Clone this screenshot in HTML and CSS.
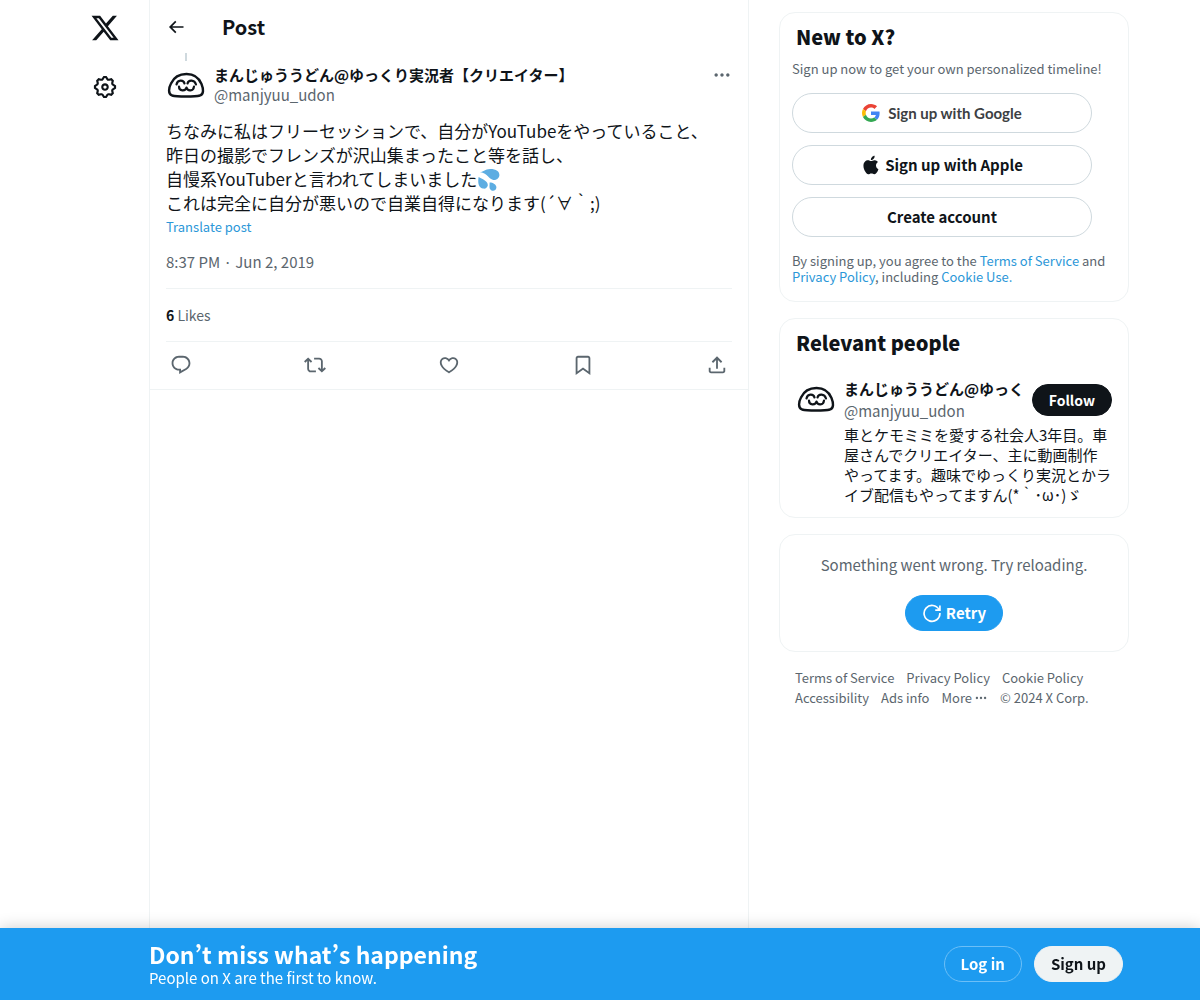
FILE: index.html
```
<!DOCTYPE html>
<html lang="ja">
<head>
  <meta charset="UTF-8">
  <meta name="viewport" content="width=device-width, initial-scale=1.0">
  <title>Post / X</title>
  <link rel="stylesheet" href="styles.css">
</head>
<body>
  <!-- Shared drawings -->
  <svg class="defs" aria-hidden="true">
    <symbol id="face" viewBox="0 0 40 40">
      <path d="M6 30.500C2 29 2.500 23 5 18.500 8 12 14 9 20.500 9 28 9 33 13 35.500 19c2 5 2.500 10-1.500 11.500-5 1.300-23 1.300-28 0z" fill="#fff" stroke="#0f1419" stroke-width="2.400" stroke-linejoin="round"/>
      <path d="M10.500 19.500c1-5 7-5 8-1M21.500 18.500c1-4 7-4 8.500 1M13 21.500c0 5 6.500 5 7.500 1 1 4 7 4 7.500-1" fill="none" stroke="#0f1419" stroke-width="2.200" stroke-linecap="round" stroke-linejoin="round"/>
    </symbol>
  </svg>

  <div class="layout">
    <!-- Left Navigation -->
    <header class="side-nav">
      <a href="#" aria-label="X">
        <svg class="logo" viewBox="0 0 24 24"><path d="M18.244 2.25h3.308l-7.227 8.26 8.502 11.24H16.17l-5.214-6.817L4.99 21.75H1.68l7.73-8.835L1.254 2.25H8.08l4.713 6.231zm-1.161 17.52h1.833L7.084 4.126H5.117z"/></svg>
      </a>
      <a href="#" aria-label="Settings">
        <svg class="settings-icon" viewBox="0 0 24 24"><path d="M10.54 1.75h2.92l1.57 2.36c.11.17.32.25.53.21l2.53-.59 2.17 2.17-.58 2.54c-.05.2.04.41.21.53l2.36 1.57v2.92l-2.36 1.57c-.17.12-.26.33-.21.53l.58 2.54-2.17 2.17-2.53-.59c-.21-.04-.42.04-.53.21l-1.57 2.36h-2.92l-1.58-2.36c-.11-.17-.32-.25-.52-.21l-2.54.59-2.17-2.17.58-2.54c.05-.2-.03-.41-.21-.53l-2.35-1.57v-2.92L4.1 8.97c.18-.12.26-.33.21-.53L3.73 5.9 5.9 3.73l2.54.59c.2.04.41-.04.52-.21l1.58-2.36zm1.07 2l-.98 1.47C10.05 6.08 9 6.5 7.99 6.27l-1.46-.34-.6.6.33 1.46c.24 1.01-.18 2.07-1.05 2.64l-1.46.98v.78l1.46.98c.87.57 1.29 1.63 1.05 2.64l-.33 1.46.6.6 1.46-.34c1.01-.23 2.06.19 2.64 1.05l.98 1.47h.78l.97-1.47c.58-.86 1.63-1.28 2.65-1.05l1.45.34.61-.6-.34-1.46c-.23-1.01.18-2.07 1.05-2.64l1.47-.98v-.78l-1.47-.98c-.87-.57-1.28-1.63-1.05-2.64l.34-1.46-.61-.6-1.45.34c-1.02.23-2.07-.19-2.65-1.05l-.97-1.47h-.78zM12 10.5c-.83 0-1.5.67-1.5 1.5s.67 1.5 1.5 1.5c.82 0 1.5-.67 1.5-1.5s-.68-1.5-1.5-1.5zM8.5 12c0-1.93 1.56-3.5 3.5-3.5 1.93 0 3.5 1.57 3.5 3.5s-1.57 3.5-3.5 3.5c-1.94 0-3.5-1.57-3.5-3.5z"/></svg>
      </a>
    </header>

    <!-- Post Column -->
    <main class="timeline">
      <div class="topbar">
        <button class="icon-btn" type="button" aria-label="Back">
          <svg class="small-icon" viewBox="0 0 24 24"><path d="M7.414 13l5.043 5.04-1.414 1.42L3.586 12l7.457-7.46 1.414 1.42L7.414 11H21v2H7.414z"/></svg>
        </button>
        <h1>Post</h1>
      </div>

      <article class="post">
        <div class="thread-line"></div>
        <div class="author">
          <svg class="avatar"><use href="#face"/></svg>
          <div class="author-names">
            <a class="name" href="#">まんじゅううどん@ゆっくり実況者【クリエイター】</a>
            <a class="handle" href="#">@manjyuu_udon</a>
          </div>
          <button class="icon-btn more" type="button" aria-label="More">
            <svg class="small-icon" viewBox="0 0 24 24"><path d="M3 12c0-1.1.9-2 2-2s2 .9 2 2-.9 2-2 2-2-.9-2-2zm9 2c1.1 0 2-.9 2-2s-.9-2-2-2-2 .9-2 2 .9 2 2 2zm7 0c1.1 0 2-.9 2-2s-.9-2-2-2-2 .9-2 2 .9 2 2 2z"/></svg>
          </button>
        </div>
        <p class="post-text">ちなみに私はフリーセッションで、自分がYouTubeをやっていること、<br>昨日の撮影でフレンズが沢山集まったこと等を話し、<br>自慢系YouTuberと言われてしまいました<svg class="emoji" viewBox="0 0 36 36" role="img" aria-label="sweat drops"><path fill="#5dade2" d="M3 5c7 0 8-5 17-5 10 0 15 4 15 10 0 5-5 9-10 8C17 16 17 8 3 5zM1 13c6 3 16 7 15 14-1 4-4 6-8 5-6-1-9-7-7-19zM19 22c6 0 12 4 11 9-1 5-7 6-10 2-2-2-1-6-1-11z"/></svg><br>これは完全に自分が悪いので自業自得になります(´∀｀;)</p>
        <button class="translate" type="button">Translate post</button>
        <div class="post-date"><a href="#">8:37 PM · Jun 2, 2019</a></div>
        <div class="stats"><a href="#"><strong>6</strong> Likes</a></div>
        <div class="actions">
          <button class="icon-btn" type="button" aria-label="Reply"><svg class="icon" viewBox="0 0 24 24"><path d="M1.751 10c0-4.42 3.584-8 8.005-8h4.366c4.49 0 8.129 3.64 8.129 8.13 0 2.96-1.607 5.68-4.196 7.11l-8.054 4.46v-3.69h-.067c-4.49.1-8.183-3.51-8.183-8.01zm8.005-6c-3.317 0-6.005 2.69-6.005 6 0 3.37 2.77 6.08 6.138 6.01l.351-.01h1.761v2.3l5.087-2.81c1.951-1.08 3.163-3.13 3.163-5.36 0-3.39-2.744-6.13-6.129-6.13H9.756z"/></svg></button>
          <button class="icon-btn" type="button" aria-label="Repost"><svg class="icon" viewBox="0 0 24 24"><path d="M4.5 3.88l4.432 4.14-1.364 1.46L5.5 7.55V16c0 1.1.896 2 2 2H13v2H7.5c-2.209 0-4-1.79-4-4V7.55L1.432 9.48.068 8.02 4.5 3.88zM16.5 6H11V4h5.5c2.209 0 4 1.79 4 4v8.45l2.068-1.93 1.364 1.46-4.432 4.14-4.432-4.14 1.364-1.46 2.068 1.93V8c0-1.1-.896-2-2-2z"/></svg></button>
          <button class="icon-btn" type="button" aria-label="Like"><svg class="icon" viewBox="0 0 24 24"><path d="M16.697 5.5c-1.222-.06-2.679.51-3.89 2.16l-.805 1.09-.806-1.09C9.984 6.01 8.526 5.44 7.304 5.5c-1.243.07-2.349.78-2.91 1.91-.552 1.12-.633 2.78.479 4.82 1.074 1.97 3.257 4.27 7.129 6.61 3.87-2.34 6.052-4.64 7.126-6.61 1.111-2.04 1.03-3.7.477-4.82-.561-1.13-1.666-1.84-2.908-1.91zm4.187 7.69c-1.351 2.48-4.001 5.12-8.379 7.67l-.503.3-.504-.3c-4.379-2.55-7.029-5.19-8.382-7.67-1.36-2.5-1.41-4.86-.514-6.67.887-1.79 2.647-2.91 4.601-3.01 1.651-.09 3.368.56 4.798 2.01 1.429-1.45 3.146-2.1 4.796-2.01 1.954.1 3.714 1.22 4.601 3.01.896 1.81.846 4.17-.514 6.67z"/></svg></button>
          <button class="icon-btn" type="button" aria-label="Bookmark"><svg class="icon" viewBox="0 0 24 24"><path d="M4 4.5C4 3.12 5.119 2 6.5 2h11C18.881 2 20 3.12 20 4.5v18.44l-8-5.71-8 5.71V4.5zM6.5 4c-.276 0-.5.22-.5.5v14.56l6-4.29 6 4.29V4.5c0-.28-.224-.5-.5-.5h-11z"/></svg></button>
          <button class="icon-btn" type="button" aria-label="Share"><svg class="icon" viewBox="0 0 24 24"><path d="M12 2.59l5.7 5.7-1.41 1.42L13 6.41V16h-2V6.41l-3.3 3.3-1.41-1.42L12 2.59zM21 15l-.02 3.51c0 1.38-1.12 2.49-2.5 2.49H5.5C4.11 21 3 19.88 3 18.5V15h2v3.5c0 .28.22.5.5.5h12.98c.28 0 .5-.22.5-.5L19 15h2z"/></svg></button>
        </div>
      </article>
    </main>

    <!-- Sidebar -->
    <aside class="sidebar">
      <section class="card signup">
        <h2>New to X?</h2>
        <p class="hint">Sign up now to get your own personalized timeline!</p>
        <button class="pill google" type="button">
          <svg class="google-logo" viewBox="0 0 48 48"><path fill="#EA4335" d="M24 9.5c3.54 0 6.71 1.22 9.21 3.6l6.85-6.85C35.9 2.38 30.47 0 24 0 14.62 0 6.51 5.38 2.56 13.22l7.98 6.19C12.43 13.72 17.74 9.5 24 9.5z"/><path fill="#4285F4" d="M46.98 24.55c0-1.57-.15-3.09-.38-4.55H24v9.02h12.94c-.58 2.96-2.26 5.48-4.78 7.18l7.73 6c4.51-4.18 7.09-10.36 7.09-17.65z"/><path fill="#FBBC05" d="M10.53 28.59c-.48-1.45-.76-2.99-.76-4.59s.27-3.14.76-4.59l-7.98-6.19C.92 16.46 0 20.12 0 24c0 3.88.92 7.54 2.56 10.78l7.97-6.19z"/><path fill="#34A853" d="M24 48c6.48 0 11.93-2.13 15.89-5.81l-7.73-6c-2.15 1.45-4.92 2.3-8.16 2.3-6.26 0-11.57-4.22-13.47-9.91l-7.98 6.19C6.51 42.62 14.62 48 24 48z"/></svg>
          Sign up with Google
        </button>
        <button class="pill" type="button">
          <svg class="small-icon" viewBox="0 0 24 24"><path d="M16.365 1.43c0 1.14-.493 2.27-1.177 3.08-.744.9-1.99 1.57-2.987 1.57-.12 0-.23-.02-.3-.03-.01-.06-.04-.22-.04-.39 0-1.15.572-2.27 1.206-2.98.804-.94 2.142-1.64 3.248-1.68.03.13.05.28.05.43zm4.565 15.71c-.03.07-.463 1.58-1.518 3.12-.945 1.34-1.94 2.71-3.43 2.71-1.517 0-1.9-.88-3.63-.88-1.698 0-2.302.91-3.67.91-1.377 0-2.332-1.26-3.428-2.8-1.287-1.82-2.323-4.63-2.323-7.28 0-4.28 2.797-6.55 5.552-6.55 1.448 0 2.675.95 3.6.95.865 0 2.222-1.01 3.902-1.01.613 0 2.886.06 4.374 2.19-.13.09-2.383 1.37-2.383 4.19 0 3.26 2.854 4.42 2.955 4.45z"/></svg>
          Sign up with Apple
        </button>
        <button class="pill" type="button">Create account</button>
        <p class="legal">By signing up, you agree to the <a href="#">Terms of Service</a> and <a href="#">Privacy Policy</a>, including <a href="#">Cookie Use.</a></p>
      </section>

      <section class="card people">
        <h2>Relevant people</h2>
        <div class="person">
          <svg class="avatar"><use href="#face"/></svg>
          <div class="person-info">
            <div class="person-head">
              <div class="person-names">
                <a class="name" href="#">まんじゅううどん@ゆっく</a>
                <a class="handle" href="#">@manjyuu_udon</a>
              </div>
              <button class="follow" type="button">Follow</button>
            </div>
            <p>車とケモミミを愛する社会人3年目。車屋さんでクリエイター、主に動画制作やってます。趣味でゆっくり実況とかライブ配信もやってますん(*｀･ω･)ゞ</p>
          </div>
        </div>
      </section>

      <section class="card error">
        <p>Something went wrong. Try reloading.</p>
        <button class="retry" type="button">
          <svg class="small-icon" viewBox="0 0 24 24"><path d="M20.5 8.2A9.5 9.5 0 1 0 21.5 12M21.5 3v5.600h-5.600" fill="none" stroke="currentColor" stroke-width="2"/></svg>
          Retry
        </button>
      </section>

      <nav class="footer-links">
        <a href="#">Terms of Service</a>
        <a href="#">Privacy Policy</a>
        <a href="#">Cookie Policy</a>
        <a href="#">Accessibility</a>
        <a href="#">Ads info</a>
        <a class="footer-more" href="#">More <svg class="dots" viewBox="0 0 24 24"><path d="M3 12c0-1.1.9-2 2-2s2 .9 2 2-.9 2-2 2-2-.9-2-2zm9 2c1.1 0 2-.9 2-2s-.9-2-2-2-2 .9-2 2 .9 2 2 2zm7 0c1.1 0 2-.9 2-2s-.9-2-2-2-2 .9-2 2 .9 2 2 2z"/></svg></a>
        <span>© 2024 X Corp.</span>
      </nav>
    </aside>
  </div>

  <!-- Bottom Login Bar -->
  <div class="login-bar">
    <div class="login-inner">
      <div class="login-text">
        <h2>Don’t miss what’s happening</h2>
        <p>People on X are the first to know.</p>
      </div>
      <button class="login" type="button">Log in</button>
      <button class="login signup-btn" type="button">Sign up</button>
    </div>
  </div>
</body>
</html>
```
FILE: styles.css
```
/* Global Styles */
* {
  margin: 0;
  padding: 0;
  box-sizing: border-box;
}

body {
  background-color: #fff;
  color: #0f1419;
  font-family: "Noto Sans CJK JP", "Noto Sans", sans-serif;
  font-size: 15px;
  line-height: 20px;
}

a {
  color: inherit;
  text-decoration: none;
}

button {
  font: inherit;
  color: inherit;
  background: none;
  border: none;
  cursor: pointer;
}

svg {
  fill: currentColor;
  flex-shrink: 0;
}

.defs {
  position: absolute;
  width: 0;
  height: 0;
}

.layout {
  display: flex;
  justify-content: center;
  min-height: 100vh;
}

.icon {
  width: 22px;
  height: 22px;
}

.settings-icon {
  width: 26px;
  height: 26px;
}

.small-icon {
  width: 20px;
  height: 20px;
}

.icon-btn {
  display: flex;
}

.avatar {
  width: 40px;
  height: 40px;
}

/* Left Navigation */
.side-nav {
  display: flex;
  flex-direction: column;
  align-items: center;
  gap: 31px;
  width: 88px;
  padding-top: 13px;
}

.side-nav a {
  display: flex;
}

.logo {
  width: 30px;
  height: 30px;
}

/* Post Column */
.timeline {
  width: 600px;
  border-left: 1px solid #eff3f4;
  border-right: 1px solid #eff3f4;
}

.topbar {
  display: flex;
  align-items: center;
  gap: 36px;
  height: 53px;
  padding: 0 16px;
}

.topbar h1 {
  font-size: 20px;
  line-height: 24px;
}

.post {
  padding: 0 16px;
  border-bottom: 1px solid #eff3f4;
}

.thread-line {
  width: 2px;
  height: 8px;
  margin-left: 19px;
  background-color: #cfd9de;
}

.author {
  display: flex;
  gap: 8px;
  padding-top: 4px;
}

.author-names {
  flex: 1;
}

.name,
.handle {
  display: block;
  white-space: nowrap;
  overflow: hidden;
}

.name {
  font-weight: 700;
}

.handle,
.more {
  color: #5b666e;
}

.more {
  align-self: flex-start;
}

.post-text {
  margin-top: 14px;
  font-size: 17px;
  line-height: 24px;
}

.emoji {
  width: 22px;
  height: 22px;
  margin: 0 1px;
  vertical-align: -5px;
}

.translate {
  display: block;
  color: #2b97d8;
  font-size: 13px;
  line-height: 24px;
}

.post-date {
  padding: 13px 0 16px;
  color: #5b666e;
}

.stats {
  padding: 16px 0;
  border-top: 1px solid #eff3f4;
  border-bottom: 1px solid #eff3f4;
  color: #5b666e;
  font-size: 14px;
}

.stats strong {
  color: #0f1419;
}

.actions {
  display: flex;
  justify-content: space-between;
  padding: 12px 4px 13px;
  color: #5b666e;
}

/* Sidebar */
.sidebar {
  display: flex;
  flex-direction: column;
  gap: 16px;
  width: 390px;
  padding: 12px 10px 88px 30px;
}

.card {
  border: 1px solid #eff3f4;
  border-radius: 16px;
}

.card h2 {
  font-size: 20px;
  font-weight: 800;
  line-height: 24px;
}

.signup {
  padding: 12px 12px 16px;
}

.signup h2 {
  padding: 0 4px;
}

.hint,
.legal {
  color: #5b666e;
  font-size: 13px;
  line-height: 16px;
}

.hint {
  margin: 12px 0 16px;
}

.pill {
  display: flex;
  align-items: center;
  justify-content: center;
  gap: 4px;
  width: 300px;
  height: 40px;
  margin-bottom: 12px;
  border: 1px solid #cfd9de;
  border-radius: 20px;
  font-weight: 700;
}

.google {
  gap: 8px;
  color: #3c4043;
  font-family: Lato, sans-serif;
}

.google-logo {
  width: 18px;
  height: 18px;
}

.legal {
  padding-top: 4px;
}

.legal a {
  color: #2b97d8;
}

.people {
  padding: 12px 16px;
}

.person {
  display: flex;
  gap: 8px;
  padding-top: 24px;
}

.person-info {
  flex: 1;
  min-width: 0;
}

.person-head {
  display: flex;
  align-items: center;
  gap: 8px;
  margin-bottom: 4px;
}

.person-names {
  display: flex;
  flex: 1;
  flex-direction: column;
  gap: 2px;
  min-width: 0;
}

.follow {
  height: 32px;
  padding: 0 16px;
  border: 1px solid #0f1419;
  border-radius: 16px;
  background-color: #0f1419;
  color: #fff;
  font-size: 14px;
  font-weight: 700;
}

.error {
  display: flex;
  flex-direction: column;
  align-items: center;
  gap: 20px;
  padding: 20px;
  color: #5b666e;
}

.retry {
  display: flex;
  align-items: center;
  gap: 4px;
  height: 36px;
  padding: 0 16px;
  border: 1px solid #1d9bf0;
  border-radius: 18px;
  background-color: #1d9bf0;
  color: #fff;
  font-weight: 700;
}

.footer-links {
  display: flex;
  flex-wrap: wrap;
  column-gap: 12px;
  padding: 0 16px;
  color: #5b666e;
  font-size: 13px;
}

.footer-more {
  display: flex;
  align-items: center;
  gap: 2px;
}

.dots {
  width: 14px;
  height: 14px;
}

/* Bottom Login Bar */
.login-bar {
  position: fixed;
  left: 0;
  right: 0;
  bottom: 0;
  background-color: #1d9bf0;
  color: #fff;
  box-shadow: 0 0 15px rgba(0, 0, 0, 0.2);
}

.login-inner {
  display: flex;
  align-items: center;
  gap: 12px;
  max-width: 1078px;
  margin: 0 auto;
  padding: 12px 16px 12px 88px;
}

.login-text {
  flex: 1;
}

.login-text h2 {
  font-size: 23px;
  line-height: 28px;
}

.login {
  height: 36px;
  padding: 0 16px;
  border: 1px solid #6cbff7;
  border-radius: 18px;
  font-weight: 700;
}

.signup-btn {
  border-color: #eff3f4;
  background-color: #eff3f4;
  color: #0f1419;
}
```
